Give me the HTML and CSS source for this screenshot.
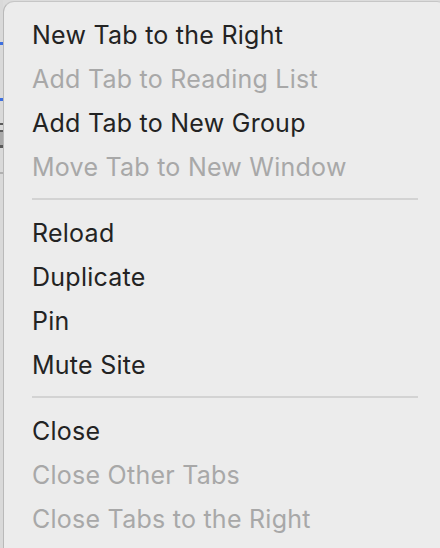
FILE: index.html
```html
<!DOCTYPE html>
<html lang="en">
<head>
<meta charset="utf-8">
<title>Tab context menu</title>
<link rel="stylesheet" href="styles.css">
</head>
<body>
<div class="page">
  <div class="edge"></div>
  <div class="menu">
    <div class="item">New Tab to the Right</div>
    <div class="item disabled">Add Tab to Reading List</div>
    <div class="item">Add Tab to New Group</div>
    <div class="item disabled">Move Tab to New Window</div>
    <div class="sep"></div>
    <div class="item">Reload</div>
    <div class="item">Duplicate</div>
    <div class="item">Pin</div>
    <div class="item">Mute Site</div>
    <div class="sep"></div>
    <div class="item">Close</div>
    <div class="item disabled">Close Other Tabs</div>
    <div class="item disabled">Close Tabs to the Right</div>
  </div>
</div>
</body>
</html>
```
FILE: styles.css
```css
html, body {
  margin: 0;
  padding: 0;
  width: 440px;
  height: 548px;
  overflow: hidden;
  background: #dcdcdc;
}

.page {
  display: flex;
  width: 460px;
  height: 548px;
}

.edge {
  flex: 0 0 3px;
  height: 548px;
  background:
    linear-gradient(to bottom,
      transparent 0 42px, #3d6fe0 42px 45px,
      transparent 45px 98px, #3d6fe0 98px 101px,
      transparent 101px 123px, #5a5a5a 123px 125px,
      transparent 125px 130px, #5e5e5e 130px 132px,
      #a9a9a9 132px 145px, #5a5a5a 145px 148px,
      transparent 148px 172px, #b0b0b0 172px 174px,
      transparent 174px),
    #d9d9d9;
}

.menu {
  flex: 0 0 445px;
  margin-top: 1px;
  height: 560px;
  box-sizing: border-box;
  background: #ececec;
  border-top: 1px solid #c6c6c6;
  border-left: 1px solid #b9b9b9;
  border-right: 1px solid #c6c6c6;
  border-radius: 11px 11px 0 0;
  padding: 11px 0 0 28px;
  font-family: Inter, "Noto Sans", sans-serif;
  font-size: 25px;
  color: #232323;
}

.item {
  height: 44px;
  line-height: 44px;
  white-space: nowrap;
  letter-spacing: 0.25px;
}

.item.disabled {
  color: #a8a8a8;
}

.sep {
  height: 22px;
  margin-right: 29px;
  box-sizing: border-box;
  padding-top: 9px;
}

.sep::before {
  content: "";
  display: block;
  height: 2px;
  background: #d3d3d3;
}
```
